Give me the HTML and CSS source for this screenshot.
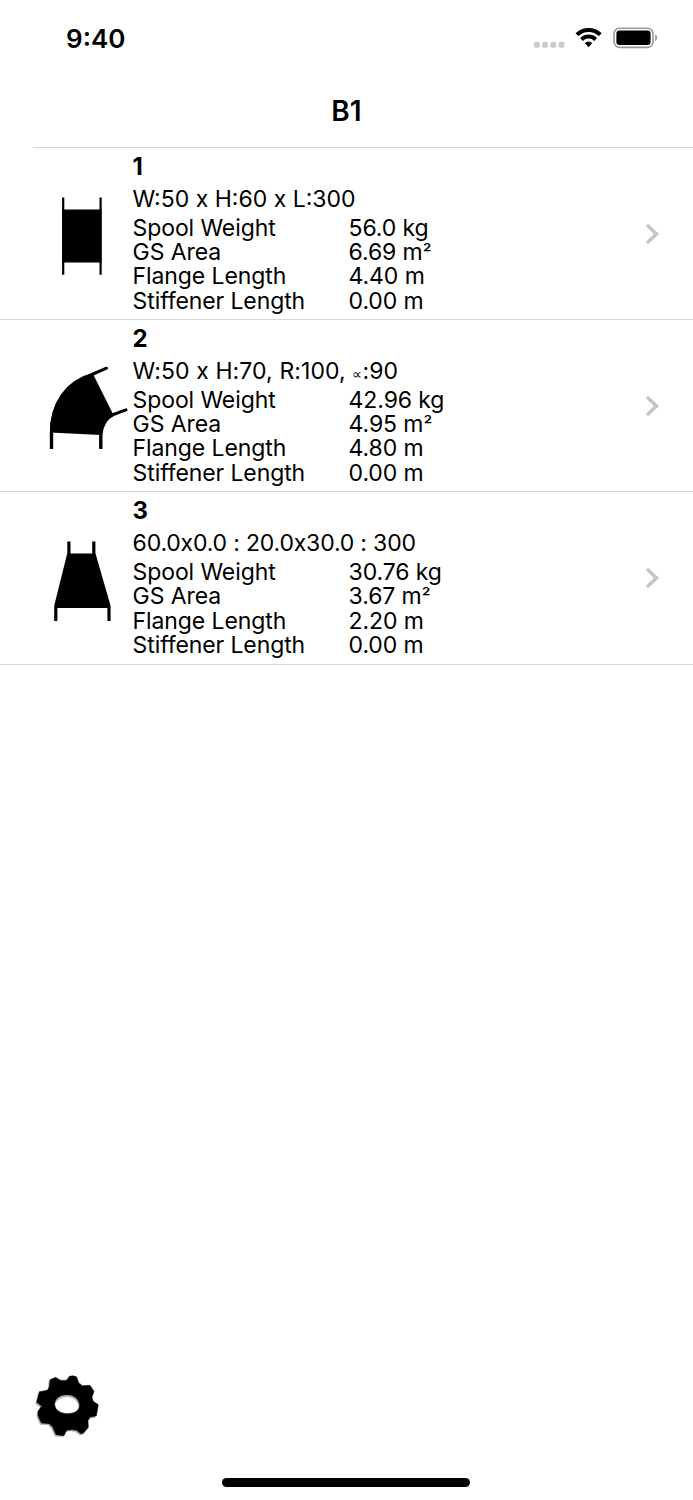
FILE: index.html
```html
<!DOCTYPE html>
<html lang="en">
<head>
    <meta charset="UTF-8">
    <meta name="viewport" content="width=device-width, initial-scale=1.0">
    <title>B1</title>
    <link rel="stylesheet" href="styles.css">
</head>
<body>
    <header class="status-bar">
        <span class="time">9:40</span>
        <svg class="status-icons" width="126" height="24" viewBox="0 0 126 24">
            <g fill="#cbcbcb">
                <rect x="0.8" y="15.8" width="6" height="6" rx="1.8"/>
                <rect x="9.1" y="15.8" width="6" height="6" rx="1.8"/>
                <rect x="17.3" y="15.8" width="6" height="6" rx="1.8"/>
                <rect x="25.5" y="15.8" width="6" height="6" rx="1.8"/>
            </g>
            <g fill="none" stroke="#000" stroke-width="4">
                <path d="M43.9 8.7A16.6 16.6 0 0 1 67.3 8.7"/>
                <path d="M48.5 13.5A10.2 10.2 0 0 1 62.7 13.5"/>
            </g>
            <path d="M51.9 17.1A5.6 5.6 0 0 1 59.3 17.1L55.6 21.2Z"/>
            <rect x="81" y="2.2" width="39" height="19.2" rx="5.5" fill="none" stroke="#999" stroke-width="1.6"/>
            <rect x="83.4" y="4.6" width="34.2" height="14.4" rx="3"/>
            <path d="M122.1 8.6Q124.3 9.6 124.3 11.8T122.1 15.2Z" fill="#999"/>
        </svg>
    </header>

    <h1 class="nav-title">B1</h1>

    <ul class="spools">
        <li class="spool">
            <svg class="shape" viewBox="0 0 100 171">
                <path d="M32 61.5H71.5V114.5H32Z"/>
                <path d="M33.2 49.5V126.8M70.6 49.5V126.8" stroke="#000" stroke-width="2.2"/>
            </svg>
            <div class="info">
                <h2>1</h2>
                <p class="size">W:50 x H:60 x L:300</p>
                <dl>
                    <dt>Spool Weight</dt><dd>56.0 kg</dd>
                    <dt>GS Area</dt><dd>6.69 m<span class="square">²</span></dd>
                    <dt>Flange Length</dt><dd>4.40 m</dd>
                    <dt>Stiffener Length</dt><dd>0.00 m</dd>
                </dl>
            </div>
            <svg class="chevron" viewBox="0 0 14 22"><path d="M2 2L11.5 11L2 20"/></svg>
        </li>
        <li class="spool">
            <svg class="shape" viewBox="0 0 100 171">
                <path d="M20 112.5C20 86 34 62 63 54L83 94Q72 101 71 115Z"/>
                <g fill="none" stroke="#000" stroke-width="3.4">
                    <path d="M21.5 129V113C21.5 84 36 62 63 54.5"/>
                    <path d="M70.8 129V115Q72 100 83 94.5"/>
                    <path d="M62 54.5L76.5 48.2M82 95L96 89.9" stroke-linecap="round" stroke-width="3"/>
                </g>
            </svg>
            <div class="info">
                <h2>2</h2>
                <p class="size elbow">W:50 x H:70, R:100, <span class="angle">∝</span>:90</p>
                <dl>
                    <dt>Spool Weight</dt><dd>42.96 kg</dd>
                    <dt>GS Area</dt><dd>4.95 m<span class="square">²</span></dd>
                    <dt>Flange Length</dt><dd>4.80 m</dd>
                    <dt>Stiffener Length</dt><dd>0.00 m</dd>
                </dl>
            </div>
            <svg class="chevron" viewBox="0 0 14 22"><path d="M2 2L11.5 11L2 20"/></svg>
        </li>
        <li class="spool">
            <svg class="shape" viewBox="0 0 100 171">
                <path d="M38 61.5H65L80 116H25Z"/>
                <path d="M38.9 49.5V61.5L25.8 114V129M63.8 49.5V61.5L79 114V129" fill="none" stroke="#000" stroke-width="3.2"/>
            </svg>
            <div class="info">
                <h2>3</h2>
                <p class="size taper">60.0x0.0 : 20.0x30.0 : 300</p>
                <dl>
                    <dt>Spool Weight</dt><dd>30.76 kg</dd>
                    <dt>GS Area</dt><dd>3.67 m<span class="square">²</span></dd>
                    <dt>Flange Length</dt><dd>2.20 m</dd>
                    <dt>Stiffener Length</dt><dd>0.00 m</dd>
                </dl>
            </div>
            <svg class="chevron" viewBox="0 0 14 22"><path d="M2 2L11.5 11L2 20"/></svg>
        </li>
    </ul>

    <footer>
        <svg class="gear" viewBox="45 40 195 195">
            <defs>
                <path id="gear" fill-rule="evenodd" stroke-linejoin="round" d="M90 57L107 50L118 57Q130 62 142 57L148 47Q160 43 170 49L176 66L187 75L210 74L222 92L216 110L220 122L235 132L229 166L210 169L204 180L205 200L190 218L182 219L170 209Q155 205 140 209L132 225L108 222L98 199L88 189L64 187L54 165V152L65 136L50 125L58 93L82 89L88 79ZM104 130C104 148 122 159 143 159C164 159 179 149 179 134C178 116 162 102 141 102C119 102 104 114 104 130Z"/>
            </defs>
            <use href="#gear" x="-4" y="5" fill="#b5b5b5"/>
            <path d="M104 130C104 94 172 94 179 134Q164 109 141 109Q117 110 104 130Z" fill="#b5b5b5"/>
            <use href="#gear" stroke="#000" stroke-width="1.5"/>
        </svg>
        <div class="home-bar"></div>
    </footer>
</body>
</html>
```

FILE: styles.css
```css
* {
    box-sizing: border-box;
    margin: 0;
    padding: 0;
}
body {
    display: flex;
    flex-direction: column;
    height: 1500px;
    background-color: white;
    color: #000;
    font-family: Inter, "Noto Sans", sans-serif;
}
.status-bar {
    display: flex;
    justify-content: space-between;
    height: 74px;
    padding: 26px 34px 0 66px;
}
.time {
    font-size: 26px;
    font-weight: 600;
    line-height: 25px;
}
.nav-title {
    height: 73px;
    font-size: 28px;
    font-weight: 600;
    line-height: 74px;
    text-align: center;
}
.spools {
    list-style: none;
}
.spools::before {
    content: "";
    display: block;
    height: 1px;
    margin-left: 33px;
    background-color: #d9d9d9;
}
.spool {
    display: flex;
    height: 172.2px;
    padding-right: 34px;
    border-bottom: 1px solid #d9d9d9;
}
.shape {
    width: 100px;
    height: 171px;
    margin-left: 30px;
}
.info {
    flex: 1;
    padding: 4px 0 0 2.6px;
    font-size: 23px;
}
.info h2 {
    height: 30px;
    font-size: 24px;
    font-weight: 700;
    line-height: 30px;
}
.size {
    height: 33.5px;
    line-height: 35.5px;
}
.size.elbow {
    letter-spacing: 0.1px;
}
.size.taper {
    letter-spacing: -0.18px;
}
.angle {
    font-size: 14px;
    line-height: 1;
}
.info dl {
    display: grid;
    grid-template-columns: 216px 1fr;
    grid-auto-rows: 24.4px;
    line-height: 24.4px;
    letter-spacing: -0.1px;
}
.square {
    font-size: 20px;
    line-height: 1;
}
.chevron {
    width: 14px;
    height: 22px;
    margin-top: 74.5px;
    fill: none;
    stroke: #c4c4c6;
    stroke-width: 3.4;
}
footer {
    margin-top: auto;
    padding: 0 0 13.5px 35px;
}
.gear {
    display: block;
    width: 65px;
    height: 65px;
    margin-bottom: 38.5px;
}
.home-bar {
    width: 248px;
    height: 9px;
    margin-left: 187px;
    border-radius: 5px;
    background-color: #000;
}
```
